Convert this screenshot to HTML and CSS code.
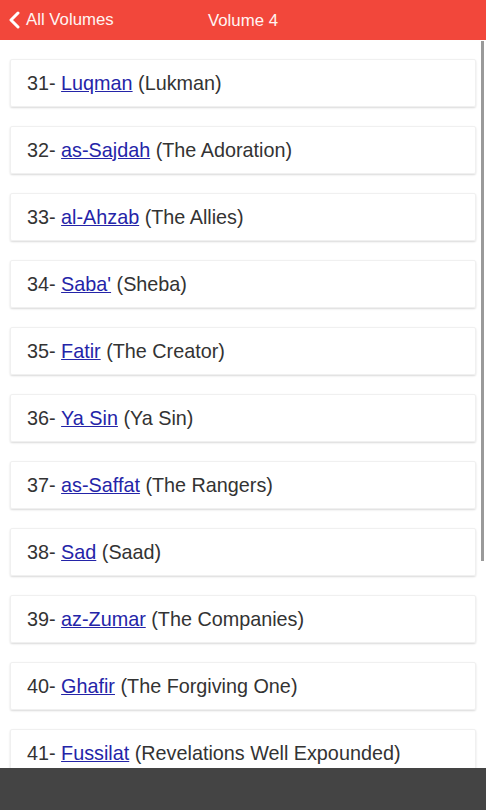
FILE: index.html
```html
<!DOCTYPE html>
<html lang="en">
<head>
    <meta charset="UTF-8">
    <meta name="viewport" content="width=device-width, initial-scale=1.0">
    <title>Volume 4</title>
    <link rel="stylesheet" href="styles.css">
</head>
<body>
    <div class="header">
        <div class="back">
            <svg width="12" height="18" viewBox="0 0 12 18"><path d="M10 2 L3 9 L10 16" fill="none" stroke="#fff" stroke-width="3" stroke-linecap="round" stroke-linejoin="round"/></svg>
            <span>All Volumes</span>
        </div>
        <div class="title">Volume 4</div>
    </div>

    <div class="list">
        <div class="item">31- <a href="#">Luqman</a> (Lukman)</div>
        <div class="item">32- <a href="#">as-Sajdah</a> (The Adoration)</div>
        <div class="item">33- <a href="#">al-Ahzab</a> (The Allies)</div>
        <div class="item">34- <a href="#">Saba'</a> (Sheba)</div>
        <div class="item">35- <a href="#">Fatir</a> (The Creator)</div>
        <div class="item">36- <a href="#">Ya Sin</a> (Ya Sin)</div>
        <div class="item">37- <a href="#">as-Saffat</a> (The Rangers)</div>
        <div class="item">38- <a href="#">Sad</a> (Saad)</div>
        <div class="item">39- <a href="#">az-Zumar</a> (The Companies)</div>
        <div class="item">40- <a href="#">Ghafir</a> (The Forgiving One)</div>
        <div class="item">41- <a href="#">Fussilat</a> (Revelations Well Expounded)</div>
    </div>

    <div class="scrollbar"></div>
    <div class="bottombar"></div>
</body>
</html>
```

FILE: styles.css
```css
body {
    margin: 0;
    font-family: "Liberation Sans", Arial, sans-serif;
    background-color: white;
    height: 810px;
    overflow: hidden;
}
.header {
    height: 40px;
    background-color: #f2473b;
    color: #fff4f2;
    display: flex;
    align-items: center;
    font-size: 16.8px;
    position: relative;
}
.back {
    display: flex;
    align-items: center;
    gap: 6px;
    padding-left: 8px;
}
.title {
    position: absolute;
    left: 208px;
    top: 11px;
}
.list {
    padding: 19px 10px 0 10px;
}
.item {
    height: 48px;
    box-sizing: border-box;
    display: flex;
    align-items: center;
    padding-left: 16px;
    margin-bottom: 19px;
    border: 1px solid #f0f0f0;
    border-radius: 2px;
    box-shadow: 0 1px 2px rgba(0, 0, 0, 0.15);
    font-size: 19.8px;
    color: #333;
    white-space: pre;
}
.item a {
    color: #2424a8;
    text-decoration: underline;
}
.scrollbar {
    position: absolute;
    left: 481px;
    top: 41px;
    width: 3px;
    height: 520px;
    background-color: #9a9a9a;
}
.bottombar {
    position: fixed;
    left: 0;
    right: 0;
    bottom: 0;
    height: 42px;
    background-color: #444;
}
```
